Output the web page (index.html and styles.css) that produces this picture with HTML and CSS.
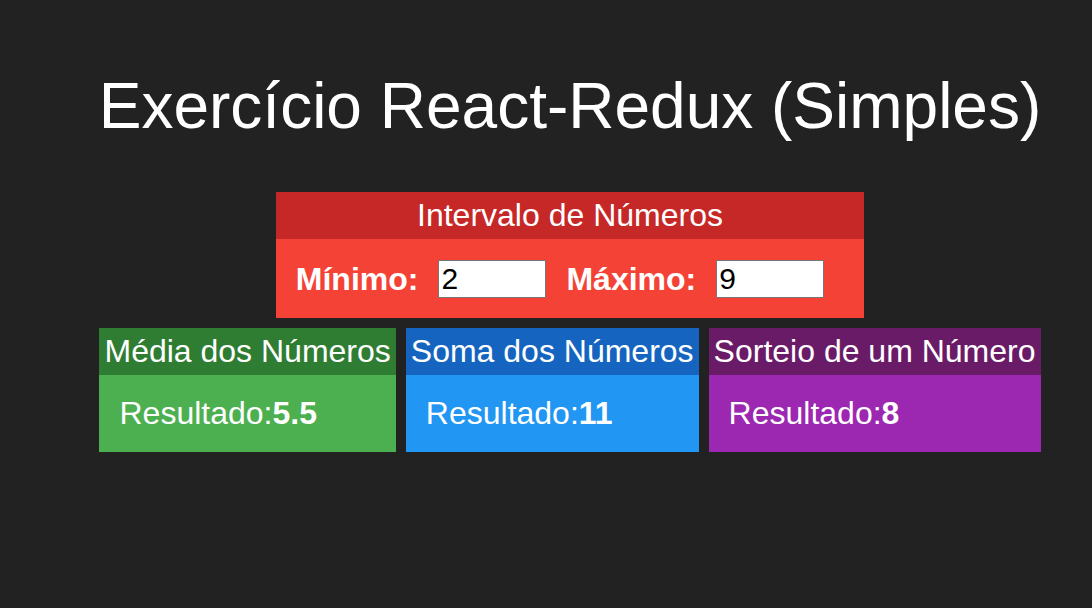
FILE: index.html
```html
<!DOCTYPE html>
<html lang="pt-BR">
<head>
<meta charset="utf-8">
<title>Exercício React-Redux (Simples)</title>
<link rel="stylesheet" href="styles.css">
</head>
<body>
<div class="app">
  <h1 class="title">Exercício React-Redux (Simples)</h1>
  <div class="card card-red interval">
    <div class="card-header">Intervalo de Números</div>
    <div class="card-body interval-body">
      <span class="field-label">Mínimo:</span>
      <input class="field-input" type="number" value="2">
      <span class="field-label">Máximo:</span>
      <input class="field-input" type="number" value="9">
    </div>
  </div>
  <div class="results">
    <div class="card card-green">
      <div class="card-header">Média dos Números</div>
      <div class="card-body">Resultado:<strong>5.5</strong></div>
    </div>
    <div class="card card-blue">
      <div class="card-header">Soma dos Números</div>
      <div class="card-body">Resultado:<strong>11</strong></div>
    </div>
    <div class="card card-purple">
      <div class="card-header">Sorteio de um Número</div>
      <div class="card-body">Resultado:<strong>8</strong></div>
    </div>
  </div>
</div>
</body>
</html>
```

FILE: styles.css
```css
html, body {
  margin: 0;
  padding: 0;
  background: #222222;
  color: #ffffff;
  font-family: "Liberation Sans", Arial, sans-serif;
}

.app {
  display: flex;
  flex-direction: column;
  align-items: center;
  padding: 69px 0 0 48px;
}

.title {
  margin: 0 0 49px 0;
  font-size: 64px;
  font-weight: normal;
  line-height: normal;
  white-space: nowrap;
}

.card {
  display: flex;
  flex-direction: column;
}

.card-header {
  padding: 5px;
  font-size: 32px;
  line-height: normal;
  text-align: center;
  white-space: nowrap;
}

.card-body {
  padding: 20px;
  font-size: 32px;
  line-height: normal;
  white-space: nowrap;
}

.card-body strong {
  font-weight: bold;
}

.interval-body {
  display: flex;
  align-items: center;
  padding: 21px 20px 20px 20px;
}

.field-label {
  font-weight: bold;
  font-size: 32px;
}

.field-input {
  box-sizing: border-box;
  width: 108px;
  height: 38px;
  margin: 0 20px;
  padding: 1px 2px;
  border: 1px solid #767676;
  background: #ffffff;
  color: #000000;
  font-family: "Liberation Sans", Arial, sans-serif;
  font-size: 30px;
  -moz-appearance: textfield;
  appearance: textfield;
}

.field-input::-webkit-outer-spin-button,
.field-input::-webkit-inner-spin-button {
  -webkit-appearance: none;
  margin: 0;
}

.results {
  display: flex;
  gap: 10px;
  margin-top: 10px;
}

.card-red .card-header { background: #c62828; }
.card-red .card-body { background: #f44336; }
.card-green .card-header { background: #2e7d32; }
.card-green .card-body { background: #4caf50; }
.card-blue .card-header { background: #1565c0; }
.card-blue .card-body { background: #2196f3; }
.card-purple .card-header { background: #6a1b67; }
.card-purple .card-body { background: #9c27b0; }
```
